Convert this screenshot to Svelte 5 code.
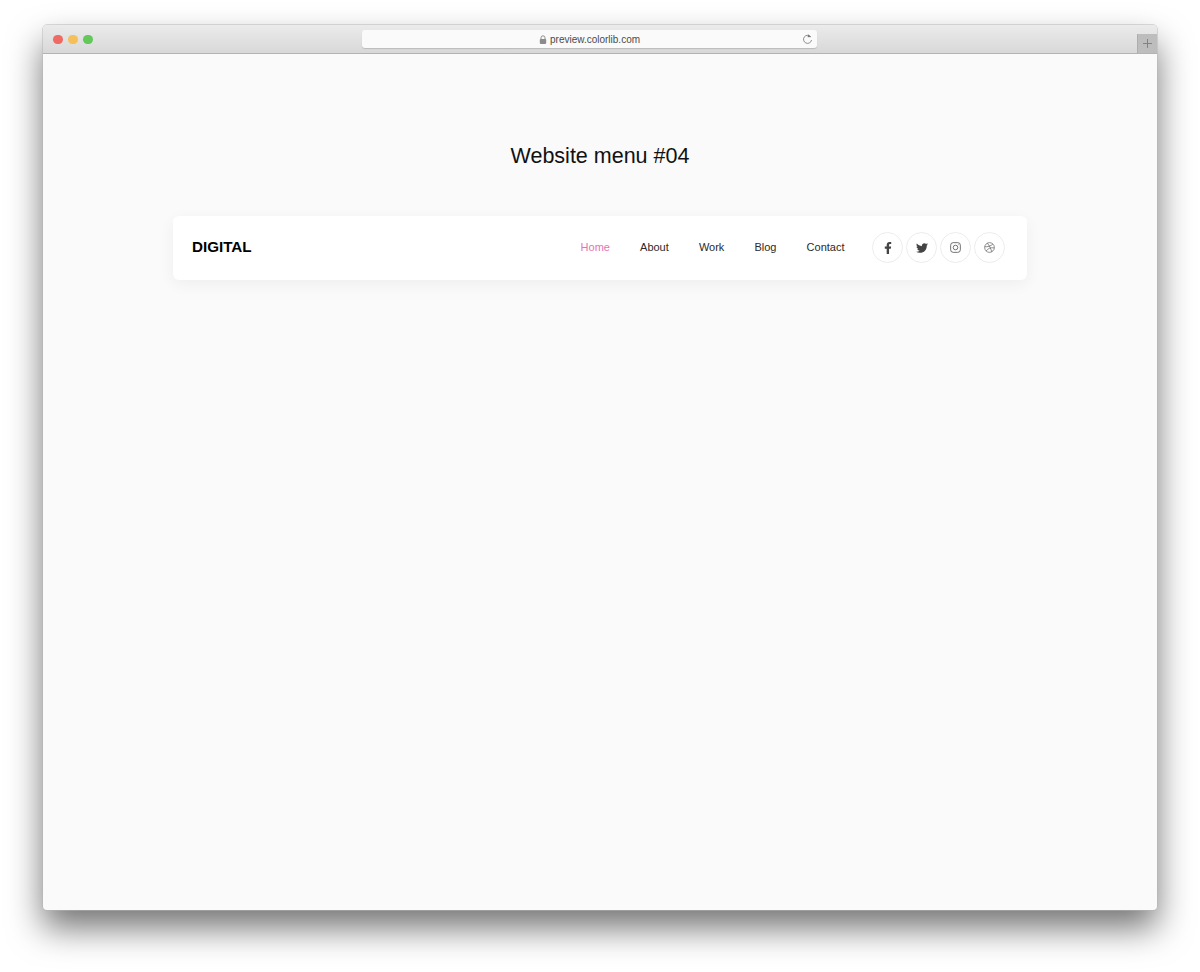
<script>
  const links = [
    { label: 'Home', active: true },
    { label: 'About' },
    { label: 'Work' },
    { label: 'Blog' },
    { label: 'Contact' }
  ];
</script>

<div class="page">
  <div class="window">
    <div class="titlebar">
      <div class="lights">
        <span class="light red"></span>
        <span class="light yellow"></span>
        <span class="light green"></span>
      </div>
      <div class="address">
        <div class="url">
          <svg class="lock" viewBox="0 0 10 11" width="8" height="9">
            <path d="M2.5 5V3.4a2.5 2.5 0 0 1 5 0V5" fill="none" stroke="#8b8b8b" stroke-width="1.2" />
            <rect x="1" y="5" width="8" height="6" rx="1" fill="#8b8b8b" />
          </svg>
          <span>preview.colorlib.com</span>
        </div>
        <svg class="reload" viewBox="0 0 12 12" width="11" height="11">
          <path d="M9.6 3.2A4.4 4.4 0 1 0 10.4 6.6" fill="none" stroke="#777" stroke-width="0.9" />
          <path d="M6.6 0.2 L9.9 3.4 L6.2 3.6 Z" fill="#777" />
        </svg>
      </div>
      <div class="newtab">
        <svg viewBox="0 0 10 10" width="9" height="9">
          <path d="M5 0v10M0 5h10" stroke="#7d7d7d" stroke-width="1" fill="none" />
        </svg>
      </div>
    </div>

    <main class="content">
      <h1>Website menu #04</h1>
      <nav class="menu">
        <a class="brand" href="#top">DIGITAL</a>
        <ul class="links">
          {#each links as link}
            <li><a href="#top" class:active={link.active}>{link.label}</a></li>
          {/each}
        </ul>
        <div class="socials">
          <a href="#top" aria-label="Facebook">
            <svg viewBox="0 0 320 512" width="8" height="12">
              <path fill="#444" d="M279.14 288l14.22-92.66h-88.91v-60.13c0-25.35 12.42-50.06 52.24-50.06h40.42V6.26S260.43 0 225.36 0c-73.22 0-121.08 44.38-121.08 124.72v70.62H22.89V288h81.39v224h100.17V288z" />
            </svg>
          </a>
          <a href="#top" aria-label="Twitter">
            <svg viewBox="0 0 512 512" width="12" height="12">
              <path fill="#444" d="M459.37 151.716c.325 4.548.325 9.097.325 13.645 0 138.72-105.583 298.558-298.558 298.558-59.452 0-114.68-17.219-161.137-47.106 8.447.974 16.568 1.299 25.34 1.299 49.055 0 94.213-16.568 130.274-44.832-46.132-.975-84.792-31.188-98.112-72.772 6.498.974 12.995 1.624 19.818 1.624 9.421 0 18.843-1.3 27.614-3.573-48.081-9.747-84.143-51.98-84.143-102.985v-1.299c13.969 7.797 30.214 12.67 47.431 13.319-28.264-18.843-46.781-51.005-46.781-87.391 0-19.492 5.197-37.36 14.294-52.954 51.655 63.675 129.3 105.258 216.365 109.807-1.624-7.797-2.599-15.918-2.599-24.04 0-57.828 46.782-104.934 104.934-104.934 30.213 0 57.502 12.67 76.67 33.137 23.715-4.548 46.456-13.32 66.599-25.34-7.798 24.366-24.366 44.833-46.132 57.827 21.117-2.273 41.584-8.122 60.426-16.243-14.292 20.791-32.161 39.308-52.628 54.253z" />
            </svg>
          </a>
          <a href="#top" aria-label="Instagram">
            <svg viewBox="0 0 12 12" width="11" height="11" fill="none" stroke="#666" stroke-width="1">
              <rect x="0.7" y="0.7" width="10.6" height="10.6" rx="2.8" />
              <circle cx="6" cy="6" r="2.5" />
              <circle cx="9" cy="3" r="0.5" fill="#666" stroke="none" />
            </svg>
          </a>
          <a href="#top" aria-label="Dribbble">
            <svg viewBox="0 0 12 12" width="11" height="11" fill="none" stroke="#666" stroke-width="0.8">
              <circle cx="6" cy="6" r="5.3" />
              <path d="M3.6 1.3C5.6 3.6 7.6 7 8.4 10.7" />
              <path d="M0.8 5.2C4 5.4 7.4 4.6 9.7 2.2" />
              <path d="M2.4 9.9C3.8 7.4 7 5.6 11.2 6.4" />
            </svg>
          </a>
        </div>
      </nav>
    </main>
  </div>
</div>

<style>
  :global(body) {
    margin: 0;
    background: #fff;
    font-family: "Liberation Sans", Arial, sans-serif;
  }
  .page {
    height: 972px;
    box-sizing: border-box;
    padding: 25px 43px 0;
    overflow: hidden;
  }
  .window {
    height: 885px;
    display: flex;
    flex-direction: column;
    border-radius: 4px;
    background: #fafafa;
    box-shadow: 0 0 0 0.5px #b5b5b5, 0 18px 34px rgba(0, 0, 0, 0.55);
    overflow: hidden;
  }
  .titlebar {
    height: 29px;
    flex: none;
    display: flex;
    align-items: flex-start;
    box-sizing: border-box;
    padding-left: 10px;
    background: linear-gradient(#ebebeb, #d8d8d8);
    border-bottom: 1px solid #b3b3b3;
  }
  .lights {
    display: flex;
    gap: 5.5px;
    padding-top: 9.5px;
    width: 309px;
  }
  .light {
    width: 9.5px;
    height: 9.5px;
    border-radius: 50%;
  }
  .red { background: #ee6a63; }
  .yellow { background: #f5c05a; }
  .green { background: #62c858; }
  .address {
    width: 455px;
    height: 18px;
    margin-top: 5px;
    display: flex;
    align-items: center;
    justify-content: space-between;
    box-sizing: border-box;
    padding-left: 177px;
    padding-right: 4px;
    background: #fafafa;
    border-radius: 3px;
    box-shadow: 0 1px 1px rgba(0, 0, 0, 0.15);
  }
  .url {
    display: flex;
    align-items: center;
    gap: 3px;
    font-size: 10px;
    color: #4a4a4a;
  }
  .newtab {
    width: 20px;
    height: 19px;
    margin-top: 9px;
    margin-left: auto;
    display: flex;
    align-items: center;
    justify-content: center;
    background: #bdbdbd;
    border-left: 1px solid #adadad;
    box-sizing: border-box;
  }
  .content {
    flex: 1;
    display: flex;
    flex-direction: column;
    align-items: center;
  }
  h1 {
    margin: 89px 0 0;
    font-size: 21.5px;
    line-height: 26px;
    font-weight: 400;
    color: #111;
  }
  .menu {
    width: 854px;
    height: 64px;
    margin-top: 47px;
    display: flex;
    align-items: center;
    box-sizing: border-box;
    padding: 0 22px 1px 19px;
    background: #fff;
    border-radius: 6px;
    box-shadow: 0 4px 16px rgba(0, 0, 0, 0.05);
  }
  .brand {
    font-size: 15.2px;
    font-weight: 700;
    color: #000;
    text-decoration: none;
    margin-right: auto;
    padding-bottom: 3px;
  }
  .links {
    display: flex;
    gap: 30.1px;
    list-style: none;
    margin: 0 27.5px 0 0;
    padding: 0 0 4px;
  }
  .links a {
    font-size: 11px;
    color: #2a2a2a;
    text-decoration: none;
  }
  .links a.active {
    color: #e672b6;
  }
  .socials {
    display: flex;
    gap: 3px;
  }
  .socials a {
    width: 31px;
    height: 31px;
    display: flex;
    align-items: center;
    justify-content: center;
    box-sizing: border-box;
    border: 1px solid #ececec;
    border-radius: 50%;
  }
</style>
